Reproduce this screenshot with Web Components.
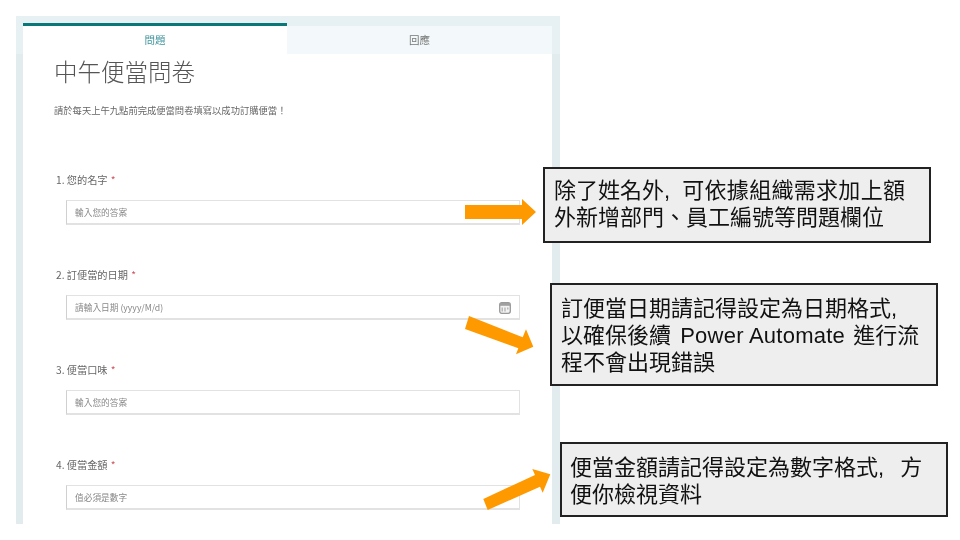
<!DOCTYPE html>
<html lang="zh-Hant">
<head>
<meta charset="utf-8">
<title>中午便當問卷</title>
<style>
  html, body { margin: 0; height: 100%; background: #fff; }
  body { position: relative; width: 960px; height: 540px; overflow: hidden; padding: 16px 0 0 16px; box-sizing: border-box; }
</style>
</head>
<body>
<form-frame>
  <form-tab slot="tabs" active>問題</form-tab>
  <form-tab slot="tabs">回應</form-tab>
  <form-title>中午便當問卷</form-title>
  <form-desc>請於每天上午九點前完成便當問卷填寫以成功訂購便當！</form-desc>
  <form-question num="1" label="您的名字" hint="輸入您的答案"></form-question>
  <form-question num="2" label="訂便當的日期" hint="請輸入日期 (yyyy/M/d)" calendar></form-question>
  <form-question num="3" label="便當口味" hint="輸入您的答案"></form-question>
  <form-question num="4" label="便當金額" hint="值必須是數字"></form-question>
</form-frame>

<note-arrow x="465" y="199" w="71" h="26" points="0,6 57,6 57,0 71,13 57,26 57,20 0,20"></note-arrow>
<note-arrow x="465" y="316" w="69" h="39" points="4,0 57.7,21.3 61,13.3 68.3,30.7 51,38.3 53.3,32.3 0,13"></note-arrow>
<note-arrow x="483" y="469" w="68" h="42" points="0.3,30 52,6 49.3,0 67.3,5.3 59.7,23.7 57,17.7 4.7,41"></note-arrow>

<note-box x="543" y="167" w="388" h="76" pad="8" side="9">除了姓名外<span class="comma tight">,</span> <span class="wide">可依據組織需求加上額</span><br>外新增部門、員工編號等問題欄位</note-box>
<note-box x="550" y="283" w="388" h="103" pad="10" side="9">訂便當日期請記得設定為日期格式<span class="comma">,</span><br>以確保後續 <span class="latin">Power Automate</span> 進行流<br>程不會出現錯誤</note-box>
<note-box x="560" y="442" w="388" h="75" pad="10" side="8">便當金額請記得設定為數字格式<span class="comma">,</span> 方<br>便你檢視資料</note-box>

<script>
const FORM_FONT = '"Noto Sans CJK TC", "Noto Sans", sans-serif';

class FormFrame extends HTMLElement {
    constructor() {
        super();
        this.attachShadow({ mode: 'open' });
        this.shadowRoot.innerHTML = `
            <style>
                :host {
                    display: flex;
                    flex-direction: column;
                    width: 544px;
                    height: 508px;
                    box-sizing: border-box;
                    padding: 7px 8px 0 7px;
                    background: linear-gradient(#e7f0f3 38px, #e2ebee 38px);
                    font-family: ${FORM_FONT};
                }
                .tabs { display: flex; height: 31px; flex: none; }
                .panel { flex: 1; background: #fff; overflow: hidden; filter: blur(0.55px); }
            </style>
            <div class="tabs"><slot name="tabs"></slot></div>
            <div class="panel"><slot></slot></div>
        `;
    }
}

class FormTab extends HTMLElement {
    constructor() {
        super();
        this.attachShadow({ mode: 'open' });
        this.shadowRoot.innerHTML = `
            <style>
                :host {
                    flex: 0 0 265px;
                    box-sizing: border-box;
                    display: flex;
                    justify-content: center;
                    align-items: center;
                    margin-top: 3px;
                    padding-bottom: 2px;
                    background: #f3f9fa;
                    color: #777;
                    font-size: 10.5px;
                }
                :host([active]) {
                    flex-basis: 264px;
                    margin-top: 0;
                    border-top: 3px solid #0a7878;
                    background: #fff;
                    color: #3b939c;
                }
                .label { filter: blur(0.5px); }
            </style>
            <span class="label"><slot></slot></span>
        `;
    }
}

class FormTitle extends HTMLElement {
    constructor() {
        super();
        this.attachShadow({ mode: 'open' });
        this.shadowRoot.innerHTML = `
            <style>
                :host {
                    display: block;
                    padding-left: 31px;
                    font-size: 23.5px;
                    font-weight: 300;
                    line-height: 34px;
                    color: #555;
                }
            </style>
            <slot></slot>
        `;
    }
}

class FormDesc extends HTMLElement {
    constructor() {
        super();
        this.attachShadow({ mode: 'open' });
        this.shadowRoot.innerHTML = `
            <style>
                :host {
                    display: block;
                    margin-top: 16px;
                    margin-bottom: 14px;
                    padding-left: 31px;
                    font-size: 9.3px;
                    line-height: 12px;
                    color: #666;
                }
            </style>
            <slot></slot>
        `;
    }
}

class FormQuestion extends HTMLElement {
    constructor() {
        super();
        this.attachShadow({ mode: 'open' });
    }

    connectedCallback() {
        const icon = this.hasAttribute('calendar') ? `
            <svg width="12" height="12" viewBox="0 0 12 12">
                <rect x="0.7" y="0.7" width="10.6" height="10.6" rx="2" fill="#f2f2f2" stroke="#999" stroke-width="1.3"/>
                <rect x="1" y="1" width="10" height="2.8" fill="#a0a0a0"/>
                <path d="M3.2 5.4v4M6 5.4v4M8.8 5.4v2.2" stroke="#aaa" stroke-width="1.2"/>
            </svg>` : '';
        this.shadowRoot.innerHTML = `
            <style>
                :host { display: block; padding-top: 43px; }
                .label {
                    padding-left: 33px;
                    font-size: 10.2px;
                    line-height: 14px;
                    color: #666;
                }
                .star { margin-left: 1px; color: #d0525a; }
                .input {
                    display: flex;
                    justify-content: space-between;
                    align-items: center;
                    box-sizing: border-box;
                    height: 25px;
                    margin: 13px 32px 0 43px;
                    padding: 1px 8px 0 8px;
                    border: 1px solid #e2e2e2;
                    border-bottom-width: 2px;
                    border-left-color: #d0d0d0;
                    font-size: 8.7px;
                    color: #888;
                }
            </style>
            <div class="label">${this.getAttribute('num')}. ${this.getAttribute('label')} <span class="star">*</span></div>
            <div class="input"><span>${this.getAttribute('hint')}</span>${icon}</div>
        `;
    }
}

class NoteBox extends HTMLElement {
    constructor() {
        super();
        this.attachShadow({ mode: 'open' });
    }

    connectedCallback() {
        const a = (name) => this.getAttribute(name);
        this.shadowRoot.innerHTML = `
            <style>
                :host {
                    position: absolute;
                    left: ${a('x')}px;
                    top: ${a('y')}px;
                    width: ${a('w')}px;
                    height: ${a('h')}px;
                    box-sizing: border-box;
                    padding: ${a('pad')}px 0 0 ${a('side')}px;
                    border: 2px solid #222;
                    background: #eee;
                    color: #111;
                    font-family: "Liberation Sans", "Noto Sans CJK TC", sans-serif;
                    font-size: 22px;
                    line-height: 27px;
                    white-space: nowrap;
                }
                .text { display: block; filter: blur(0.3px); }
                ::slotted(.comma) { margin-right: 10px; }
                ::slotted(.tight) { margin-right: 6px; }
                ::slotted(.wide) { letter-spacing: 0.3px; }
                ::slotted(.latin) { margin: 0 2px 0 3px; letter-spacing: 0.25px; }
            </style>
            <span class="text"><slot></slot></span>
        `;
    }
}

class NoteArrow extends HTMLElement {
    constructor() {
        super();
        this.attachShadow({ mode: 'open' });
    }

    connectedCallback() {
        const a = (name) => this.getAttribute(name);
        this.shadowRoot.innerHTML = `
            <style>
                :host { position: absolute; left: ${a('x')}px; top: ${a('y')}px; line-height: 0; }
            </style>
            <svg width="${a('w')}" height="${a('h')}" viewBox="0 0 ${a('w')} ${a('h')}">
                <polygon points="${a('points')}" fill="#ff9900"/>
            </svg>
        `;
    }
}

customElements.define('form-frame', FormFrame);
customElements.define('form-tab', FormTab);
customElements.define('form-title', FormTitle);
customElements.define('form-desc', FormDesc);
customElements.define('form-question', FormQuestion);
customElements.define('note-box', NoteBox);
customElements.define('note-arrow', NoteArrow);
</script>
</body>
</html>
